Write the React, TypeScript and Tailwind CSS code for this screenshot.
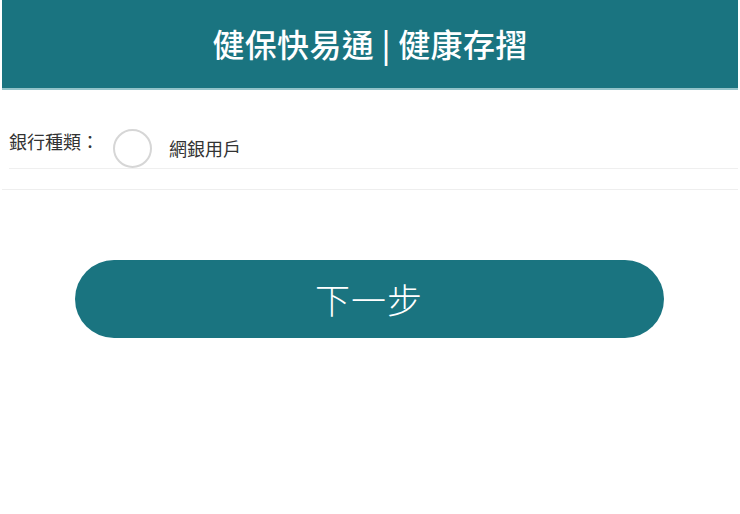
export default function App() {
  return (
    <div
      className="min-h-screen bg-white px-[2px]"
      style={{ fontFamily: '"Noto Sans CJK TC", "Noto Sans", sans-serif' }}
    >
      {/* Header */}
      <header className="h-[90px] bg-[#1a7480] border-b-2 border-[#93c3c9] flex items-center justify-center pb-[3px]">
        <h1 className="text-[32px] font-medium text-white tracking-[0.3px] leading-none">
          健保快易通 | 健康存摺
        </h1>
      </header>

      {/* Bank type */}
      <div className="border-b border-[#eeeeee] pb-5">
        <div className="ml-[7px] pt-[39px] border-b border-[#efefef] flex items-start h-[79px]">
          <span className="text-[18px] leading-6 text-[#333333] w-[104px]">銀行種類：</span>
          <div className="w-[39px] h-[39px] rounded-full border-2 border-[#d6d6d6] bg-white"></div>
          <span className="ml-[17px] text-[18px] leading-[39px] text-[#333333]">網銀用戶</span>
        </div>
      </div>

      {/* Next */}
      <div className="flex justify-center pt-[70px] pr-[2px]">
        <button className="w-[589px] h-[78px] rounded-full bg-[#1a7480] text-white text-[35px] font-light tracking-[1px]">
          下一步
        </button>
      </div>
    </div>
  );
}
